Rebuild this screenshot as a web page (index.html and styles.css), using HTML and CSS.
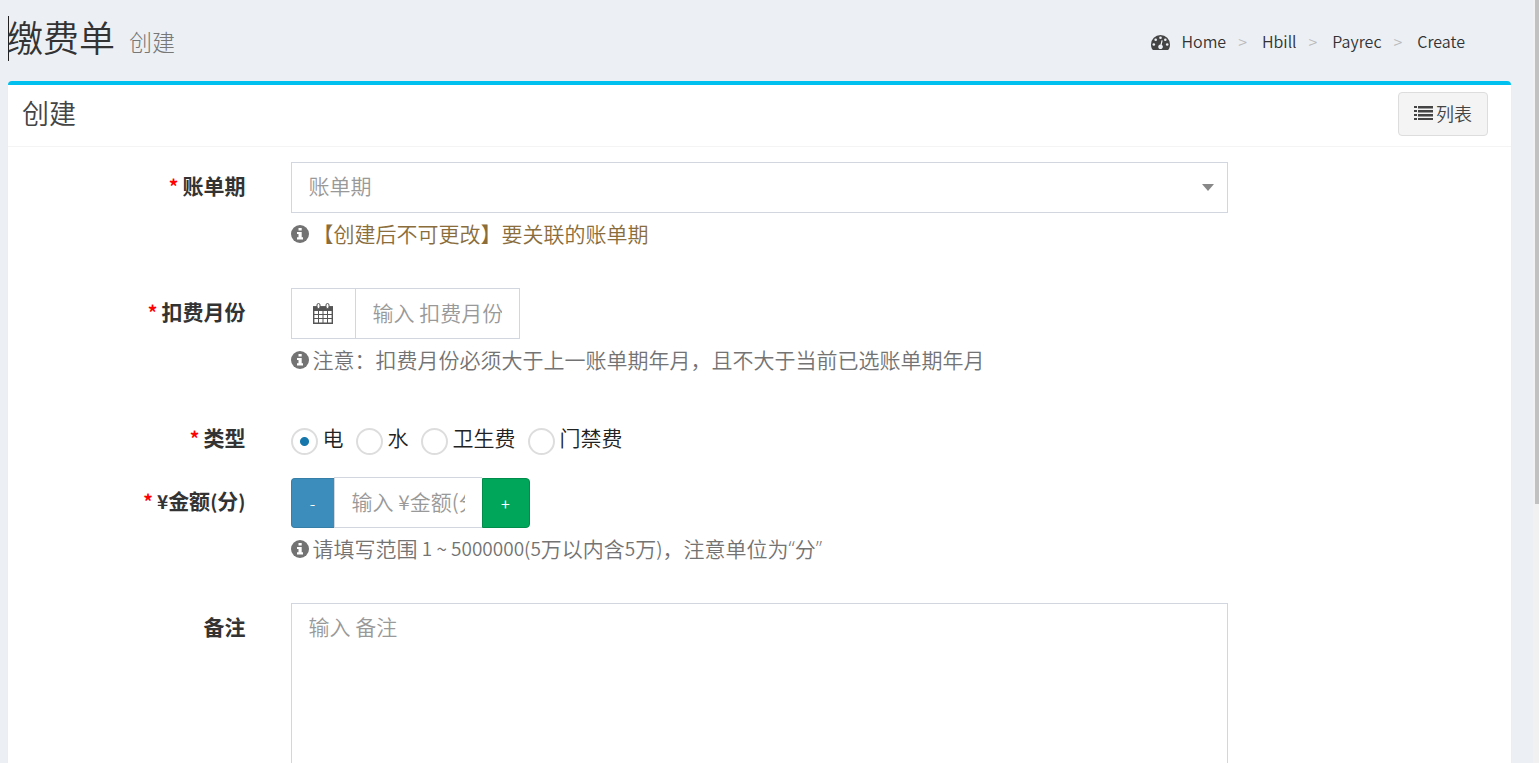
FILE: index.html
```html
<!DOCTYPE html>
<html lang="zh-CN">
<head>
<meta charset="utf-8">
<meta name="viewport" content="width=device-width, initial-scale=1">
<title>缴费单</title>
<link rel="stylesheet" href="styles.css">
</head>
<body>
<svg class="sprite" aria-hidden="true">
  <symbol id="info" viewBox="0 0 18 18">
    <circle cx="9" cy="9" r="9" fill="currentColor"/>
    <path fill="#fff" d="M7.500 3h3.200v2.600H7.500zM6 7h4.700v5.200H12V14.400H6v-2.200h1.500V9.100H6z"/>
  </symbol>
</svg>
<div class="page">
  <header class="page-header">
    <h1 class="page-title">缴费单<small class="page-subtitle">创建</small></h1>
    <nav aria-label="breadcrumb">
      <ol class="breadcrumb">
        <li><a href="#"><svg class="dash-icon" viewBox="0 0 19 15" aria-hidden="true"><path fill="#444" d="M9.500 0A9.500 9.500 0 0 0 0 9.500c0 1.900.5 3.600 1.400 5.100.2.300.5.400.8.400h14.600c.3 0 .6-.1.8-.4.9-1.500 1.400-3.200 1.400-5.100A9.500 9.500 0 0 0 9.500 0z"/><g fill="#ecf0f5"><circle cx="9.500" cy="2.700" r="1.300"/><circle cx="4.700" cy="4.700" r="1.300"/><circle cx="2.800" cy="9.500" r="1.300"/><circle cx="14.300" cy="4.700" r="1.300"/><circle cx="16.200" cy="9.500" r="1.300"/><path d="M10.500 5.300l1.200.3-1 4.200a2.300 2.300 0 1 1-1.200-.3z"/></g></svg>Home</a></li>
        <li><a href="#">Hbill</a></li>
        <li><a href="#">Payrec</a></li>
        <li><a href="#">Create</a></li>
      </ol>
    </nav>
  </header>
  <main class="box">
    <div class="box-header">
      <h2 class="box-title">创建</h2>
      <button type="button" class="list-button"><svg class="list-icon" viewBox="0 0 19 14" aria-hidden="true"><path fill="#444" d="M0 0h3v2H0zM4 0h15v2.500H4zM0 4h3v2H0zM4 4h15v2.500H4zM0 8h3v2H0zM4 8h15v2.500H4zM0 12h3v2H0zM4 12h15v2H4z"/></svg>列表</button>
    </div>
    <form class="form">
      <div class="form-group">
        <label class="label required" for="period">账单期</label>
        <div class="field">
          <div class="select-wrap">
            <select class="control" id="period"><option>账单期</option></select>
            <svg class="caret" viewBox="0 0 12 7" aria-hidden="true"><path fill="#888" d="M0 0h12L6 7z"/></svg>
          </div>
          <p class="help"><svg class="info-icon" aria-hidden="true"><use href="#info"/></svg><span class="warn">【创建后不可更改】要关联的账单期</span></p>
        </div>
      </div>
      <div class="form-group">
        <label class="label required" for="month">扣费月份</label>
        <div class="field">
          <div class="input-group">
            <span class="addon"><svg class="calendar" viewBox="0 0 20 21" aria-hidden="true"><g fill="none" stroke="#555"><path stroke-width="1.400" d="M.7 4h18.600v16.300H.7z"/><path stroke-width="1" d="M1 11.500h18M1 15.500h18M5.500 7v13M10 7v13M14.500 7v13"/></g><path fill="#555" d="M0 3.300h20V8H0z"/><g fill="#fff" stroke="#555"><rect x="4" y=".5" width="3" height="5" rx="1.500"/><rect x="13" y=".5" width="3" height="5" rx="1.500"/></g></svg></span>
            <input class="control month-input" id="month" type="text" placeholder="输入 扣费月份">
          </div>
          <p class="help"><svg class="info-icon" aria-hidden="true"><use href="#info"/></svg>注意：扣费月份必须大于上一账单期年月，且不大于当前已选账单期年月</p>
        </div>
      </div>
      <div class="form-group" role="radiogroup" aria-labelledby="type-label">
        <span class="label required" id="type-label">类型</span>
        <div class="field radios">
          <label class="radio"><input type="radio" name="type" checked>电</label>
          <label class="radio"><input type="radio" name="type">水</label>
          <label class="radio"><input type="radio" name="type">卫生费</label>
          <label class="radio"><input type="radio" name="type">门禁费</label>
        </div>
      </div>
      <div class="form-group">
        <label class="label required" for="amount"><span class="latin">¥</span>金额<span class="latin">(</span>分<span class="latin">)</span></label>
        <div class="field">
          <div class="input-group">
            <button type="button" class="step minus">-</button>
            <input class="control amount-input" id="amount" type="text" placeholder="输入 ¥金额(分)">
            <button type="button" class="step plus">+</button>
          </div>
          <p class="help"><svg class="info-icon" aria-hidden="true"><use href="#info"/></svg>请填写范围<span class="latin"> 1 ~ 5000000(5</span>万以内含<span class="latin">5</span>万<span class="latin">)</span>，注意单位为<span class="quote">“</span>分<span class="quote">”</span></p>
        </div>
      </div>
      <div class="form-group">
        <label class="label" for="remark">备注</label>
        <div class="field"><textarea class="control remark" id="remark" rows="8" placeholder="输入 备注"></textarea></div>
      </div>
    </form>
  </main>
</div>
<div class="scroll-track" aria-hidden="true"><div class="scroll-thumb"></div></div>
</body>
</html>
```
FILE: styles.css
```css
* { box-sizing: border-box; }
body {
  margin: 0;
  height: 100vh;
  overflow: hidden;
  display: flex;
  background: #ecf0f5;
  color: #333;
  font: 350 21px/30px "Noto Sans CJK SC", sans-serif;
}
input, select, textarea, button { font: inherit; margin: 0; }
h1, h2, p, ol { margin: 0; padding: 0; }
.sprite { position: absolute; width: 0; height: 0; }
.latin { font-size: 19px; }
.quote { font-family: "Open Sans", sans-serif; font-size: 21px; }
.page { flex: 1; min-width: 0; padding: 0 22px 0 8px; }
.page-header {
  display: flex;
  justify-content: space-between;
  align-items: center;
  height: 81px;
  padding-right: 46px;
}
.page-title {
  font-size: 36px;
  font-weight: 350;
  line-height: 41px;
  padding-bottom: 4px;
  border-left: 1px solid #222;
  margin-bottom: 4px;
  text-indent: -2px;
}
.page-subtitle { margin-left: 14px; font-size: 23px; line-height: 24px; vertical-align: 1px; font-weight: 300; color: #777; }
.breadcrumb { display: flex; list-style: none; font-size: 16px; line-height: 24px; }
.breadcrumb a { color: #333; text-decoration: none; }
.breadcrumb li + li::before { content: ">"; color: #bbb; padding: 0 15px 0 12px; }
.dash-icon { width: 19px; height: 15px; margin-right: 11px; vertical-align: -2px; }
.box {
  background: #fff;
  border-top: 4px solid #00c0ef;
  border-radius: 4px;
  box-shadow: 0 1px 1px rgba(0, 0, 0, .1);
}
.box-header {
  display: flex;
  justify-content: space-between;
  align-items: center;
  height: 62px;
  padding: 0 23px 4px 14px;
  border-bottom: 1px solid #f4f4f4;
}
.box-title { font-size: 27px; line-height: 30px; padding-bottom: 2px; font-weight: 350; color: #444; }
.list-button {
  display: flex;
  align-items: center;
  gap: 3px;
  height: 44px;
  padding: 0 15px 1px;
  border: 1px solid #ddd;
  border-radius: 4px;
  background: #f4f4f4;
  color: #444;
  font-size: 18px;
}
.list-icon { width: 19px; height: 14px; }
.form { padding: 15px; }
.form-group { display: grid; grid-template-columns: 2fr 8fr 2fr; margin-bottom: 22px; }
.label { padding: 8px 23px 0 0; text-align: right; font-weight: 700; }
.required::before { content: "*"; color: #f00; font-size: 19px; margin-right: 4px; }
.field { min-width: 0; padding: 0 23px 0 22px; }
.control {
  display: block;
  width: 100%;
  height: 51px;
  padding: 0 17px 3px;
  border: 1px solid #d2d6de;
  border-radius: 0;
  background: #fff;
  color: #999;
  appearance: none;
  outline: 0;
}
select.control { padding-bottom: 5px; }
.control::placeholder { color: #999; opacity: 1; }
.select-wrap { position: relative; }
.caret { position: absolute; right: 14px; top: 22px; width: 12px; height: 7px; pointer-events: none; }
.help { display: flex; align-items: center; margin: 5px 0 18px; color: #737373; white-space: pre; }
.info-icon { width: 18px; height: 18px; margin: 2px 4px 0 0; color: #737373; }
.warn { color: #8a6d3b; }
.input-group { display: flex; align-items: flex-end; }
.addon {
  display: flex;
  align-items: center;
  justify-content: center;
  width: 64px;
  height: 51px;
  border: 1px solid #d2d6de;
  border-right: 0;
}
.calendar { width: 20px; height: 21px; }
.month-input { width: 165px; }
.amount-input { width: 148px; border-right: 0; }
.step { height: 50px; color: #fff; border: 1px solid; font-size: 16px; padding: 0; }
.minus { width: 43px; background: #3c8dbc; border-color: #367fa9; border-right: 0; border-radius: 4px 0 0 4px; }
.plus { width: 48px; background: #00a65a; border-color: #008d4c; border-radius: 0 4px 4px 0; }
.radios { display: flex; gap: 12px; padding-top: 8px; height: 41px; }
.radio { display: flex; gap: 5px; color: #222; }
.radio input {
  appearance: none;
  width: 27px;
  height: 27px;
  margin-top: 6px;
  border: 2px solid #ddd;
  border-radius: 50%;
  background: #fff;
}
.radio input:checked { background: radial-gradient(circle, #1577ab 4px, #fff 5px); }
.remark { height: auto; padding: 7px 17px; resize: none; }
.scroll-track { width: 6px; background: #f1f1f1; padding-left: 2px; }
.scroll-thumb { height: 66vh; background: #c1c1c1; }
```
